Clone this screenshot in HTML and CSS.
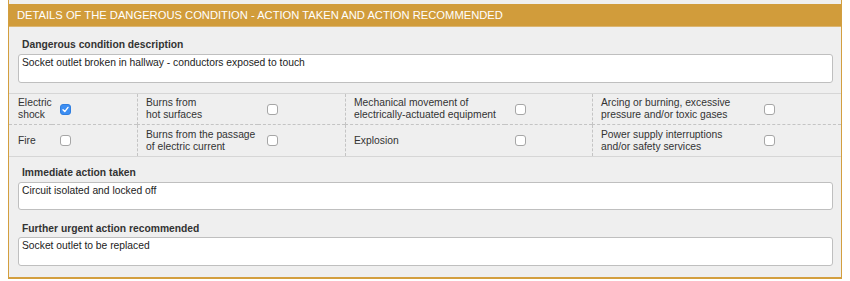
FILE: index.html
```html
<!DOCTYPE html>
<html lang="en">
<head>
    <meta charset="UTF-8">
    <meta name="viewport" content="width=device-width, initial-scale=1.0">
    <title>Dangerous Condition</title>
    <link rel="stylesheet" href="styles.css">
</head>
<body>
    <div class="panel">
        <div class="panel-title">Details of the dangerous condition - action taken and action recommended</div>

        <div class="field">
            <label class="field-label" for="description">Dangerous condition description</label>
            <textarea id="description" class="field-input">Socket outlet broken in hallway - conductors exposed to touch</textarea>
        </div>

        <div class="hazards">
            <div class="hz-label first">Electric<br>shock</div>
            <div class="hz-box"><span class="check checked"><svg viewBox="0 0 11 11" width="11" height="11"><path d="M3 5.8 L4.8 7.6 L8 3.4" fill="none" stroke="#fff" stroke-width="1.4" stroke-linecap="round" stroke-linejoin="round"/></svg></span></div>
            <div class="hz-label">Burns from<br>hot surfaces</div>
            <div class="hz-box"><span class="check"></span></div>
            <div class="hz-label">Mechanical movement of<br>electrically-actuated equipment</div>
            <div class="hz-box"><span class="check"></span></div>
            <div class="hz-label">Arcing or burning, excessive<br>pressure and/or toxic gases</div>
            <div class="hz-box"><span class="check"></span></div>

            <div class="hz-label first bottom">Fire</div>
            <div class="hz-box bottom"><span class="check"></span></div>
            <div class="hz-label bottom">Burns from the passage<br>of electric current</div>
            <div class="hz-box bottom"><span class="check"></span></div>
            <div class="hz-label bottom">Explosion</div>
            <div class="hz-box bottom"><span class="check"></span></div>
            <div class="hz-label bottom">Power supply interruptions<br>and/or safety services</div>
            <div class="hz-box bottom"><span class="check"></span></div>
        </div>

        <div class="field compact">
            <label class="field-label" for="immediate">Immediate action taken</label>
            <textarea id="immediate" class="field-input short">Circuit isolated and locked off</textarea>
        </div>

        <div class="field last">
            <label class="field-label" for="further">Further urgent action recommended</label>
            <textarea id="further" class="field-input">Socket outlet to be replaced</textarea>
        </div>
    </div>
</body>
</html>
```

FILE: styles.css
```css
body {
    margin: 0 8px;
    font-family: "Liberation Sans", Arial, sans-serif;
    font-size: 10.3px;
    color: #333;
    background-color: #fff;
}

.panel {
    background-color: #efefef;
    border: 1px solid #d39f3f;
    border-top: none;
    border-bottom-width: 2px;
    padding: 4px 0 11px 0;
}

.panel-title {
    height: 22px;
    line-height: 22px;
    padding-left: 8px;
    background-color: #d19c3b;
    border-bottom: 1px solid #dcb672;
    color: #fff;
    font-size: 11.2px;
    text-transform: uppercase;
}

.field {
    padding: 11px 8px 0 9px;
}

.field.compact {
    padding-top: 9px;
}

.field.last {
    padding-top: 12px;
}

.field-label {
    display: block;
    font-weight: bold;
    line-height: 13px;
    padding-left: 4px;
    margin-bottom: 3px;
    color: #333;
}

.field.last .field-label {
    margin-bottom: 2px;
}

.field-input {
    display: block;
    box-sizing: border-box;
    width: 100%;
    height: 29px;
    margin: 0;
    padding: 1px 3px;
    font-family: "Liberation Sans", Arial, sans-serif;
    font-size: 10.3px;
    line-height: 13px;
    color: #222;
    background-color: #fff;
    border: 1px solid #bfbfbf;
    border-radius: 3px;
    resize: none;
    overflow: hidden;
}

.field-input.short {
    height: 28px;
}

.hazards {
    display: grid;
    grid-template-columns: 43px 85px 121px 87px 160px 87px 160px 89px;
    grid-auto-rows: 31px;
    margin-top: 10px;
    border-top: 1px solid #d6d6d6;
    border-bottom: 1px solid #d6d6d6;
}

.hz-label {
    display: flex;
    align-items: center;
    padding-left: 8px;
    line-height: 12px;
    white-space: nowrap;
    color: #333;
    border-left: 1px dashed #c4c4c4;
    border-bottom: 1px dashed #c4c4c4;
}

.hz-label.first {
    border-left: none;
    padding-left: 9px;
}

.hz-box {
    display: flex;
    align-items: center;
    padding-left: 8px;
    border-bottom: 1px dashed #c4c4c4;
}

.hz-label.bottom,
.hz-box.bottom {
    border-bottom: none;
}

.hazards > :nth-child(4) { padding-left: 9px; }
.hazards > :nth-child(6) { padding-left: 10px; }
.hazards > :nth-child(8) { padding-left: 12px; }
.hazards > :nth-child(12) { padding-left: 9px; }
.hazards > :nth-child(14) { padding-left: 10px; }
.hazards > :nth-child(16) { padding-left: 12px; }

.check {
    display: block;
    box-sizing: border-box;
    width: 11px;
    height: 11px;
    background-color: #fff;
    border: 1px solid #a6a6a6;
    border-radius: 3px;
}

.check.checked {
    background-color: #3d8ef2;
    border-color: #2f7ee0;
}

.check svg {
    display: block;
    margin: -1px;
}
```
